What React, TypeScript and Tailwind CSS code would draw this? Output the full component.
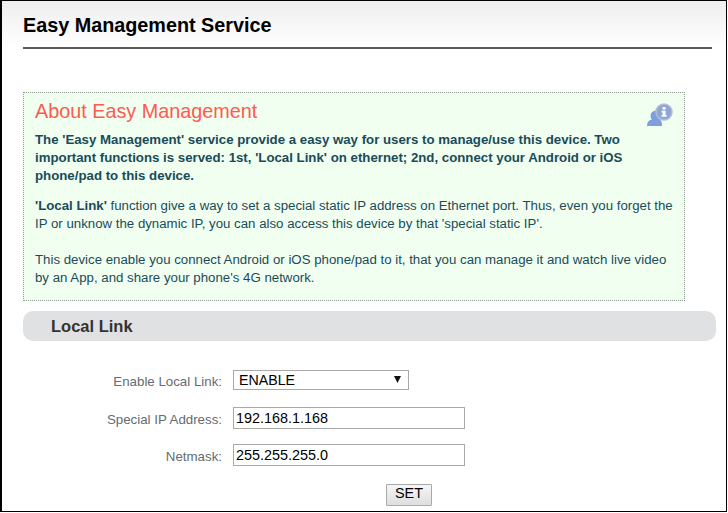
export default function App() {
  const Row = ({ label, children, cls }: { label: string; children: React.ReactNode; cls: string }) => (
    <div className={`flex items-center ${cls}`}>
      <label className="w-[220px] pt-[3px] text-right text-[13.3px] text-[#666b70]">{label}</label>
      <div className="ml-[11px]">{children}</div>
    </div>
  );
  return (
    <div className="h-[512px] w-[727px] overflow-hidden border border-l-2 border-black bg-white font-['Liberation_Sans',Arial,sans-serif]">
      <div className="h-[46px] bg-gradient-to-b from-[#eeeeee] to-white pl-[21px] pr-[14px]">
        <h1 className="pt-[12px] text-[19.8px] font-bold leading-[24px] text-black">Easy Management Service</h1>
      </div>
      <div className="ml-[21px] mr-[14px] h-[2px] bg-[#5a5a5a]" />
      <div className="ml-[21px] mr-[41px] mt-[43px] h-[209px] border border-dotted border-[#8f9f8f] bg-[#f0fff0] px-[11px]">
        <div className="flex items-start justify-between">
          <h2 className="pt-[6px] text-[19.8px] font-normal leading-[24px] text-[#ff5a50]">About Easy Management</h2>
          <svg width="28" height="26" viewBox="0 0 28 26" className="-mr-[1px] mt-[9px]">
            <circle cx="10" cy="14" r="5.5" fill="#7f9fdc" />
            <path d="M1 24 C1 18 5 17 10 17 C15 17 16 19 16 24 Z" fill="#7f9fdc" />
            <circle cx="18" cy="10" r="8" fill="#8fa6d4" stroke="#b4bfd6" strokeWidth="1.5" />
            <rect x="16.6" y="5" width="3" height="2.6" fill="#fff" />
            <path d="M15.6 8.8 H19.6 V13 H20.6 V14.8 H15.6 V13 H16.6 V10.4 H15.6 Z" fill="#fff" />
          </svg>
        </div>
        <p className="mt-[3px] text-[13.25px] font-bold leading-[18px] text-[#1b4b5a]">
          The 'Easy Management' service provide a easy way for users to manage/use this device. Two important functions is served: 1st, 'Local Link' on ethernet; 2nd, connect your Android or iOS phone/pad to this device.
        </p>
        <p className="mt-[12px] text-[13.25px] leading-[18px] text-[#1b4b5a]">
          <b>'Local Link'</b> function give a way to set a special static IP address on Ethernet port. Thus, even you forget the IP or unknow the dynamic IP, you can also access this device by that 'special static IP'.
        </p>
        <p className="mt-[18px] text-[13.25px] leading-[18px] text-[#1b4b5a]">
          This device enable you connect Android or iOS phone/pad to it, that you can manage it and watch live video by an App, and share your phone's 4G network.
        </p>
      </div>
      <div className="ml-[21px] mr-[10px] mt-[10px] flex h-[30px] items-center rounded-[10px] bg-[#e0e1e3] pl-[28px]">
        <h3 className="text-[16.5px] font-bold text-[#333333]">Local Link</h3>
      </div>
      <Row label="Enable Local Link:" cls="mt-[29px] h-[20px]">
        <div className="relative flex h-[20px] w-[176px] items-center border border-[#a9a9a9] bg-white pl-[5px] pt-[1px] text-[14.2px] text-black">
          ENABLE
          <svg width="8" height="7" viewBox="0 0 8 7" className="absolute right-[6px] top-[5px]"><path d="M0 0 H7 L3.5 7 Z" fill="#111" /></svg>
        </div>
      </Row>
      <Row label="Special IP Address:" cls="mt-[17px] h-[22px]">
        <input readOnly defaultValue="192.168.1.168" className="h-[22px] w-[232px] border border-[#a9a9a9] bg-white px-[2px] text-[14.4px] text-black outline-none" />
      </Row>
      <Row label="Netmask:" cls="mt-[15px] h-[22px]">
        <input readOnly defaultValue="255.255.255.0" className="h-[22px] w-[232px] border border-[#a9a9a9] bg-white px-[2px] text-[14.4px] text-black outline-none" />
      </Row>
      <div className="ml-[384px] mt-[15px]">
        <button className="h-[22px] w-[46px] rounded-[1px] border border-[#a9a9a9] bg-gradient-to-b from-[#f6f6f6] to-[#dedede] pb-[3px] text-[14.4px] leading-none text-black">SET</button>
      </div>
    </div>
  );
}
